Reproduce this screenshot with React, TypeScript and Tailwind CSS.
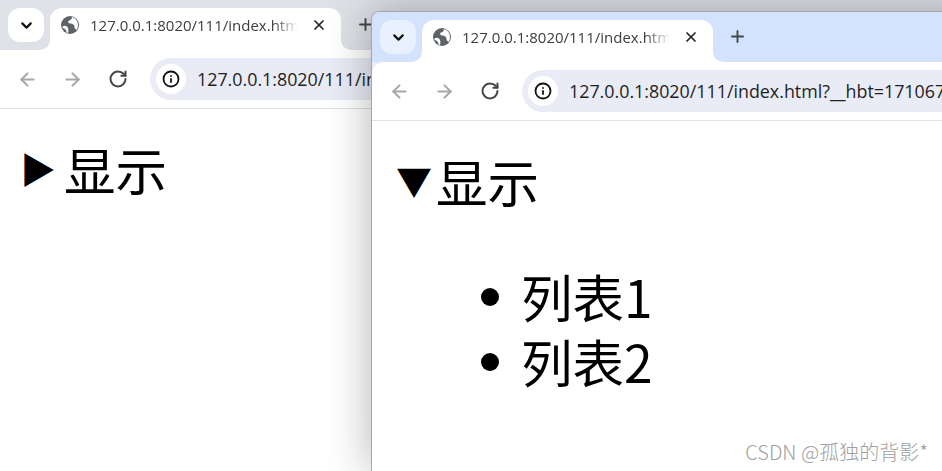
import React from 'react';
import { ArrowLeft, ArrowRight, ChevronDown, Info, Plus, RotateCw, X } from 'lucide-react';

const url = '127.0.0.1:8020/111/index.html?__hbt=171067';
const uiFont = "font-['Open_Sans','Liberation_Sans',sans-serif]";
const cjkFont = "font-['Noto_Sans_CJK_SC','Noto_Sans',sans-serif]";

function Globe() {
  return (
    <svg width="18" height="18" viewBox="0 0 18 18" className="shrink-0">
      <circle cx="9" cy="9" r="9" fill="#5f6368" />
      <path d="M1.5 10.5 C4 9 6 10 7 12 C7.5 14 7.5 15.5 7 17 L5.5 16.5 C5.5 14 4 12.5 1.5 12 Z" fill="#fff" />
      <path d="M11 1 C11 3 10 4 8 4.5 C6.5 5.5 7 7 9 7.5 C12 7.5 14 9 13.5 12 L15.5 14 C17 12 17.5 9 16.5 6 C15.5 3.5 13.5 1.5 11 1 Z" fill="#fff" />
    </svg>
  );
}

function Toolbar() {
  return (
    <div className="flex h-[59px] items-center rounded-tl-xl border-b border-[#e0e0e0] bg-white pl-[5px]">
      <div className="flex h-[45px] w-[45px] shrink-0 items-center justify-center text-[#a8a8a8]">
        <ArrowLeft size={21} strokeWidth={2.4} />
      </div>
      <div className="flex h-[45px] w-[45px] shrink-0 items-center justify-center text-[#a8a8a8]">
        <ArrowRight size={21} strokeWidth={2.4} />
      </div>
      <div className="flex h-[45px] w-[45px] shrink-0 items-center justify-center text-[#444746]">
        <RotateCw size={20} strokeWidth={2.4} />
      </div>
      <div className="ml-[10px] flex h-[42px] min-w-0 flex-1 items-center rounded-l-full bg-[#e9ecf6] pl-[6px]">
        <div className="flex h-[30px] w-[30px] shrink-0 items-center justify-center rounded-full bg-white text-[#111]">
          <Info size={18} strokeWidth={2.4} />
        </div>
        <span className={`ml-[11px] whitespace-nowrap text-[17.85px] text-[#1f1f1f] ${uiFont}`}>{url}</span>
      </div>
    </div>
  );
}

function Tab({ flareClass }: { flareClass: string }) {
  return (
    <div className="relative flex h-[42px] w-[291px] items-center rounded-t-xl bg-white pb-[8px] pl-[11px]">
      <Globe />
      <span
        className={`ml-[11px] w-[208px] overflow-hidden whitespace-nowrap text-[15px] text-[#3c4043] [mask-image:linear-gradient(to_right,black_88%,transparent)] ${uiFont}`}
      >
        {url}
      </span>
      <X size={16} strokeWidth={2.6} className="ml-[13px] text-[#222]" />
      <div className="absolute bottom-0 left-[-10px] h-[10px] w-[10px] bg-white">
        <div className={`h-full w-full rounded-br-[10px] ${flareClass}`} />
      </div>
      <div className="absolute bottom-0 right-[-10px] h-[10px] w-[10px] bg-white">
        <div className={`h-full w-full rounded-bl-[10px] ${flareClass}`} />
      </div>
    </div>
  );
}

function BrowserWindow({ active }: { active: boolean }) {
  return (
    <div className="flex h-full flex-col">
      <div className={`flex h-[50px] shrink-0 items-end pl-[8px] ${active ? 'bg-[#d3e3fd]' : 'bg-[#dee1e6]'}`}>
        <div
          className={`mb-[8px] flex h-[34px] w-[36px] items-center justify-center rounded-xl text-[#111] ${
            active ? 'bg-[#e9f0fe]' : 'bg-white'
          }`}
        >
          <ChevronDown size={17} strokeWidth={3} />
        </div>
        <div className="ml-[6px]">
          <Tab flareClass={active ? 'bg-[#d3e3fd]' : 'bg-[#dee1e6]'} />
        </div>
        <Plus size={19} strokeWidth={2.4} className="mb-[16px] ml-[15px] text-[#444746]" />
      </div>
      <Toolbar />
      <div className={`flex-1 bg-white text-[51.5px] leading-[65px] text-black ${cjkFont}`}>
        <div className="flex items-center pl-[25px] pt-[27px]">
          <span className={`text-[36px] ${active ? 'ml-[-1px] w-[40px]' : 'ml-[-5px] w-[44px]'}`}>
            {active ? '▼' : '▶'}
          </span>
          <span>显示</span>
        </div>
        {active && (
          <ul className="mt-[50px] list-none pl-[109px]">
            {['列表1', '列表2'].map((item) => (
              <li key={item} className="flex items-center">
                <span className="mt-[2px] h-[18px] w-[18px] rounded-full bg-black" />
                <span className="ml-[22px]">{item}</span>
              </li>
            ))}
          </ul>
        )}
      </div>
    </div>
  );
}

export default function App() {
  return (
    <div className="relative h-[471px] w-[942px] overflow-hidden bg-white">
      <div className="absolute left-0 top-0 h-[471px] w-[942px]">
        <BrowserWindow active={false} />
      </div>
      <div className="absolute left-[371px] top-[11px] h-[460px] w-[700px] overflow-hidden rounded-tl-lg border-l border-t border-[#a3a6aa] shadow-[0_0_45px_rgba(0,0,0,0.3)]">
        <BrowserWindow active />
      </div>
      <div
        className={`absolute right-[14px] top-[437px] whitespace-nowrap text-[20px] font-light text-[#a0a0a0] ${cjkFont}`}
      >
        CSDN @孤独的背影*
      </div>
    </div>
  );
}
